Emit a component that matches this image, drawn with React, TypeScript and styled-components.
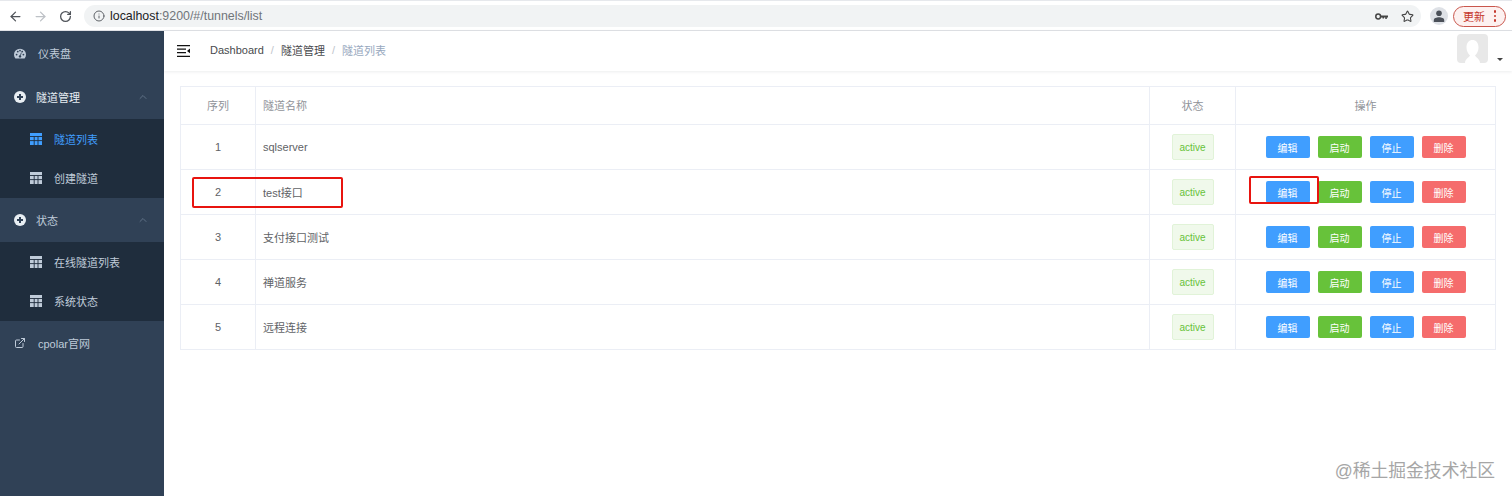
import styled, { createGlobalStyle } from "styled-components";
import { ArrowLeft, ArrowRight, RotateCw, Info, Star, ChevronUp, ExternalLink } from "lucide-react";

const rows = [
  { id: 1, name: "sqlserver" },
  { id: 2, name: "test接口" },
  { id: 3, name: "支付接口测试" },
  { id: 4, name: "禅道服务" },
  { id: 5, name: "远程连接" },
];

const Global = createGlobalStyle`
  html, body { margin: 0; padding: 0; background: #fff; }
  body {
    width: 1512px;
    height: 496px;
    overflow: hidden;
    font-family: "Liberation Sans", "Noto Sans CJK SC", sans-serif;
  }
`;

const GridIcon = ({ color }: { color: string }) => (
  <svg width="12" height="12" viewBox="0 0 12 12">
    <rect width="12" height="12" fill={color} />
    <path d="M0 3.5h12M4.2 3.5V12M8 3.5V12M0 7.6h12" stroke="#1f2d3d" strokeWidth="0.9" />
  </svg>
);

const CircleIcon = () => (
  <svg width="12" height="12" viewBox="0 0 12 12">
    <circle cx="6" cy="6" r="6" fill="#e8eef3" />
    <path d="M6 3v6M3 6h6" stroke="#304156" strokeWidth="2" />
  </svg>
);

const DashIcon = () => (
  <svg width="12" height="11" viewBox="0 0 12 11">
    <path d="M1.4 10.5A6 6 0 1 1 10.6 10.5Z" fill="#bfcbd9" />
    <g fill="#304156">
      <circle cx="2.6" cy="6.6" r="0.9" />
      <circle cx="9.4" cy="6.6" r="0.9" />
      <circle cx="3.8" cy="3.6" r="0.9" />
      <circle cx="8.2" cy="3.6" r="0.9" />
      <circle cx="6" cy="2.6" r="0.9" />
      <circle cx="6" cy="8.4" r="1.2" />
    </g>
    <path d="M6 8.400 7.400 4.600" stroke="#304156" strokeWidth="0.8" />
  </svg>
);

const HamburgerIcon = () => (
  <svg width="13" height="12" viewBox="0 0 13 12">
    <path d="M0 .7h13M0 4.200h9M0 7.700h9M0 11.300h13" stroke="#111" strokeWidth="1.200" />
    <path d="M13 3.500v4.800L10 6Z" fill="#111" />
  </svg>
);

const KeyIcon = () => (
  <svg width="13" height="7" viewBox="0 0 13 7">
    <circle cx="3.200" cy="3.500" r="2.400" fill="none" stroke="#444" strokeWidth="1.500" />
    <path d="M5.500 2.600H13v1.800h-1.200V6h-1.500V4.400H9V5.600H7.500V4.400H5.500Z" fill="#444" />
  </svg>
);

const PersonIcon = () => (
  <svg width="12" height="12" viewBox="0 0 12 12">
    <circle cx="6" cy="3.200" r="2.800" fill="#4b5058" />
    <path d="M0.800 12V10C.8 8.200 3.500 7.200 6 7.200S11.200 8.200 11.200 10V12Z" fill="#4b5058" />
  </svg>
);

const AvatarIcon = () => (
  <svg width="31" height="29" viewBox="0 0 31 29">
    <rect width="31" height="29" rx="4" fill="#e8e8e8" />
    <path d="M8 29c0-4 4-5.500 5-7.500-2-2-3.500-4.500-3.500-8 0-5 2.500-7.500 6-7.500s6 2.500 6 7.500c0 3.500-1.500 6-3.500 8 1 2 5 3.500 5 7.500Z" fill="#fff" />
  </svg>
);

const Page = styled.div`
  width: 1512px;
  height: 496px;
  display: flex;
  flex-direction: column;
  position: relative;
  overflow: hidden;
`;

const BrowserBar = styled.div`
  height: 31px;
  flex: none;
  box-sizing: border-box;
  display: flex;
  align-items: center;
  padding: 1px 0 0 7px;
  background: #fff;
  border-top: 1px solid #e6e8ec;
  border-bottom: 1px solid #dfe1e5;
  color: #5f6368;
`;

const NavButton = styled.span<{ $muted?: boolean }>`
  width: 17px;
  margin-right: 8px;
  display: flex;
  align-items: center;
  justify-content: center;
  color: ${(p) => (p.$muted ? "#bdc1c6" : "#50545a")};
`;

const Omnibox = styled.div`
  margin-left: 2px;
  width: 1337px;
  height: 22px;
  flex: none;
  display: flex;
  align-items: center;
  padding: 0 7px 0 9px;
  box-sizing: border-box;
  background: #f1f3f4;
  border-radius: 11px;
  color: #5f6368;
`;

const Url = styled.span`
  margin-left: 5px;
  font-size: 12.4px;
  color: #70757a;
  flex: 1;
  & b {
    font-weight: 400;
    color: #202124;
  }
`;

const OmniIcons = styled.span`
  display: flex;
  align-items: center;
  gap: 13px;
  color: #444;
`;

const ProfileBubble = styled.span`
  margin-left: 9px;
  width: 18px;
  height: 18px;
  border-radius: 50%;
  background: #dee1e6;
  display: flex;
  align-items: center;
  justify-content: center;
`;

const UpdateButton = styled.span`
  margin-left: 5px;
  width: 53px;
  height: 21px;
  box-sizing: border-box;
  border: 1px solid #c9564c;
  border-radius: 11px;
  background: #fdf1f0;
  display: flex;
  align-items: center;
  justify-content: space-between;
  padding: 0 9px;
  color: #c5372c;
  font-size: 11px;
`;

const Dots = styled.span`
  display: flex;
  flex-direction: column;
  gap: 2px;
  & i {
    width: 2.5px;
    height: 2.5px;
    border-radius: 50%;
    background: #c5372c;
  }
`;

const Body = styled.div`
  flex: 1;
  display: flex;
  min-height: 0;
`;

const Sidebar = styled.aside`
  width: 164px;
  flex: none;
  background: #304156;
  font-size: 11px;
  color: #bfcbd9;
`;

const MenuRow = styled.div<{ $active?: boolean }>`
  height: 44px;
  display: flex;
  align-items: center;
  padding-left: 14px;
  color: ${(p) => (p.$active ? "#e6edf3" : "#bfcbd9")};
`;

const MenuLabel = styled.span<{ $gap: number }>`
  margin-left: ${(p) => p.$gap}px;
  flex: 1;
`;

const Caret = styled.span`
  width: 13px;
  margin-right: 14px;
  display: flex;
  color: #5f7186;
`;

const SubMenu = styled.div`
  background: #1f2d3d;
`;

const SubRow = styled.div<{ $active?: boolean }>`
  height: 39.5px;
  display: flex;
  align-items: center;
  padding-left: 30px;
  gap: 12px;
  color: ${(p) => (p.$active ? "#409eff" : "#bfcbd9")};
`;

const Main = styled.main`
  flex: 1;
  min-width: 0;
  display: flex;
  flex-direction: column;
`;

const Header = styled.header`
  height: 40px;
  flex: none;
  display: flex;
  align-items: center;
  padding-left: 13px;
  box-shadow: 0 1px 3px rgba(0, 21, 41, 0.08);
`;

const Crumbs = styled.nav`
  margin-left: 20px;
  padding-bottom: 2px;
  display: flex;
  align-items: center;
  font-size: 11px;
  color: #484a4d;
  flex: 1;
`;

const CrumbSep = styled.span`
  margin: 0 7px;
  color: #c0c4cc;
`;

const CrumbLast = styled.span`
  color: #97a8be;
`;

const AvatarWrap = styled.div`
  display: flex;
  align-items: flex-end;
  align-self: flex-start;
  margin: 3px 9px 0 0;
  height: 29px;
`;

const AvatarCaret = styled.span`
  margin: 0 0 2px 9px;
  border-left: 3px solid transparent;
  border-right: 3px solid transparent;
  border-top: 3px solid #444;
`;

const Content = styled.div`
  padding: 15px 16px 0 16px;
`;

const Table = styled.table`
  width: 100%;
  table-layout: fixed;
  border-collapse: collapse;
  font-size: 11px;
  color: #606266;
  border: 1px solid #ebeef5;
`;

const Th = styled.th<{ $left?: boolean }>`
  height: 35px;
  padding: 0 0 2px ${(p) => (p.$left ? "7px" : "0")};
  text-align: ${(p) => (p.$left ? "left" : "center")};
  font-weight: 400;
  color: #909399;
  border: 1px solid #ebeef5;
`;

const Td = styled.td<{ $left?: boolean }>`
  height: 44px;
  padding: 0 0 0 ${(p) => (p.$left ? "7px" : "0")};
  text-align: ${(p) => (p.$left ? "left" : "center")};
  border: 1px solid #ebeef5;
`;

const Tag = styled.span`
  display: inline-flex;
  align-items: center;
  justify-content: center;
  width: 42px;
  height: 26px;
  box-sizing: border-box;
  font-size: 10px;
  color: #67c23a;
  background: #f0f9eb;
  border: 1px solid #e1f3d8;
  border-radius: 2px;
`;

const Actions = styled.div`
  display: flex;
  justify-content: center;
  gap: 8px;
`;

const ActionButton = styled.button<{ $bg: string }>`
  width: 44px;
  height: 22px;
  padding: 0;
  border: none;
  border-radius: 2px;
  background: ${(p) => p.$bg};
  color: #fff;
  font-family: inherit;
  font-size: 10px;
`;

const Highlight = styled.div<{ $x: number; $w: number; $h: number; $y: number }>`
  position: absolute;
  left: ${(p) => p.$x}px;
  top: ${(p) => p.$y}px;
  width: ${(p) => p.$w}px;
  height: ${(p) => p.$h}px;
  box-sizing: border-box;
  border: 2px solid #e8140f;
  border-radius: 2px;
`;

const Watermark = styled.div`
  position: absolute;
  right: 17px;
  bottom: 14px;
  font-size: 17.8px;
  color: #a6a6a6;
`;

export default function App() {
  return (
    <Page>
      <Global />
      <BrowserBar>
        <NavButton>
          <ArrowLeft size={15} />
        </NavButton>
        <NavButton $muted>
          <ArrowRight size={15} />
        </NavButton>
        <NavButton>
          <RotateCw size={13} strokeWidth={2.4} />
        </NavButton>
        <Omnibox>
          <Info size={12} />
          <Url>
            <b>localhost</b>:9200/#/tunnels/list
          </Url>
          <OmniIcons>
            <KeyIcon />
            <Star size={13} />
          </OmniIcons>
        </Omnibox>
        <ProfileBubble>
          <PersonIcon />
        </ProfileBubble>
        <UpdateButton>
          更新
          <Dots>
            <i />
            <i />
            <i />
          </Dots>
        </UpdateButton>
      </BrowserBar>
      <Body>
        <Sidebar>
          <MenuRow>
            <DashIcon />
            <MenuLabel $gap={12}>仪表盘</MenuLabel>
          </MenuRow>
          <MenuRow $active>
            <CircleIcon />
            <MenuLabel $gap={10}>隧道管理</MenuLabel>
            <Caret>
              <ChevronUp size={12} />
            </Caret>
          </MenuRow>
          <SubMenu>
            <SubRow $active>
              <GridIcon color="#409eff" />
              隧道列表
            </SubRow>
            <SubRow>
              <GridIcon color="#bfcbd9" />
              创建隧道
            </SubRow>
          </SubMenu>
          <MenuRow>
            <CircleIcon />
            <MenuLabel $gap={10}>状态</MenuLabel>
            <Caret>
              <ChevronUp size={12} />
            </Caret>
          </MenuRow>
          <SubMenu>
            <SubRow>
              <GridIcon color="#bfcbd9" />
              在线隧道列表
            </SubRow>
            <SubRow>
              <GridIcon color="#bfcbd9" />
              系统状态
            </SubRow>
          </SubMenu>
          <MenuRow>
            <ExternalLink size={12} />
            <MenuLabel $gap={12}>cpolar官网</MenuLabel>
          </MenuRow>
        </Sidebar>
        <Main>
          <Header>
            <HamburgerIcon />
            <Crumbs>
              Dashboard
              <CrumbSep>/</CrumbSep>
              隧道管理
              <CrumbSep>/</CrumbSep>
              <CrumbLast>隧道列表</CrumbLast>
            </Crumbs>
            <AvatarWrap>
              <AvatarIcon />
              <AvatarCaret />
            </AvatarWrap>
          </Header>
          <Content>
            <Table>
              <colgroup>
                <col style={{ width: 75 }} />
                <col />
                <col style={{ width: 86 }} />
                <col style={{ width: 260 }} />
              </colgroup>
              <thead>
                <tr>
                  <Th>序列</Th>
                  <Th $left>隧道名称</Th>
                  <Th>状态</Th>
                  <Th>操作</Th>
                </tr>
              </thead>
              <tbody>
                {rows.map((row) => (
                  <tr key={row.id}>
                    <Td>{row.id}</Td>
                    <Td $left>{row.name}</Td>
                    <Td>
                      <Tag>active</Tag>
                    </Td>
                    <Td>
                      <Actions>
                        <ActionButton $bg="#409eff">编辑</ActionButton>
                        <ActionButton $bg="#67c23a">启动</ActionButton>
                        <ActionButton $bg="#409eff">停止</ActionButton>
                        <ActionButton $bg="#f56c6c">删除</ActionButton>
                      </Actions>
                    </Td>
                  </tr>
                ))}
              </tbody>
            </Table>
          </Content>
        </Main>
      </Body>
      <Highlight $x={192} $y={177} $w={151} $h={31} />
      <Highlight $x={1249} $y={176} $w={70} $h={28} />
      <Watermark>@稀土掘金技术社区</Watermark>
    </Page>
  );
}
